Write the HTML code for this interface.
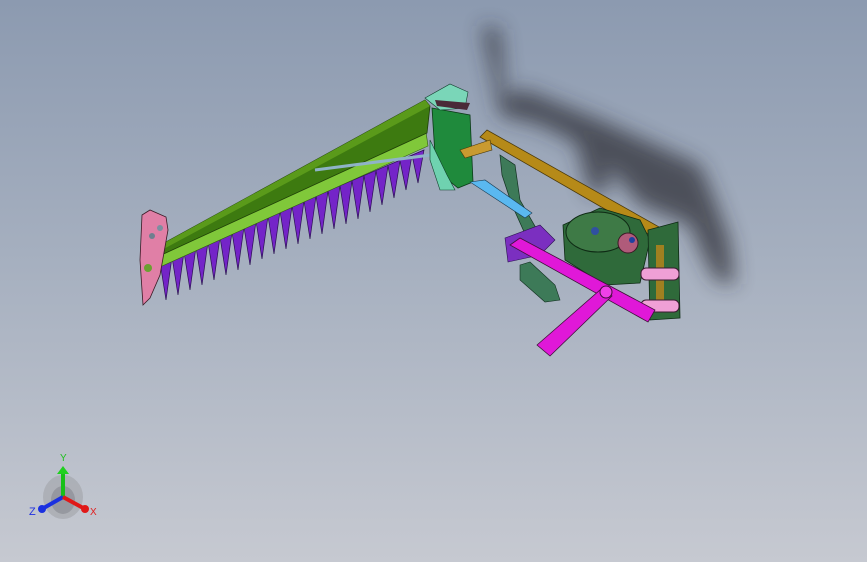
<!DOCTYPE html>
<html><head><meta charset="utf-8"><style>
html,body{margin:0;padding:0;width:867px;height:562px;overflow:hidden}
body{background:linear-gradient(#8c9ab0 0%,#a5afbf 45%,#c6c9d1 100%)}
svg{position:absolute;left:0;top:0}
</style></head><body>
<svg width="867" height="562" viewBox="0 0 867 562">
<defs><filter id="b" x="-30%" y="-30%" width="160%" height="160%"><feGaussianBlur stdDeviation="10"/></filter></defs>
<g filter="url(#b)" fill="#2a2c33" opacity="0.7">
<path d="M482 25 L500 30 L505 95 L525 90 L600 120 L700 165 L715 200 L730 240 L735 285 L715 280 L700 250 L690 225 L640 205 L620 180 L590 150 L540 125 L500 115 Z"/>
<path d="M570 120 L600 125 L610 190 L590 195 Z"/>
</g>
<!-- teeth -->
<path d="M160 262 L166 300 L172 257 L178 295 L184 252 L190 290 L196 247 L202 285 L208 242 L214 280 L220 237 L226 275 L232 232 L238 270 L244 227 L250 265 L256 221 L262 259 L268 216 L274 254 L280 211 L286 249 L292 206 L298 244 L304 201 L310 239 L316 196 L322 234 L328 191 L334 229 L340 186 L346 224 L352 181 L358 219 L364 176 L370 212 L376 171 L382 205 L388 166 L394 198 L400 161 L406 190 L412 155 L418 183 L424 150 Z" fill="#7424c8" stroke="#2a1050" stroke-width="0.7"/>
<!-- green leaf strip -->
<path d="M156 256 L426 132 L428 146 L160 267 Z" fill="#80c83a" stroke="#2f5a10" stroke-width="0.6"/>
<!-- bar -->
<path d="M155 248 L425 100 L430 106 L427 133 L157 257 Z" fill="#3d7a10" stroke="#1f4008" stroke-width="0.8"/>
<path d="M155 248 L425 100 L430 106 L158 252 Z" fill="#5a9a1a"/>
<!-- left shoe -->
<path d="M142 215 L150 210 L166 217 L168 230 L160 275 L150 298 L143 305 L140 260 Z" fill="#e07fa6" stroke="#3a1a25" stroke-width="0.8"/>
<circle cx="160" cy="228" r="3" fill="#7c8fa0"/><circle cx="152" cy="236" r="3" fill="#6f7f8f"/>
<circle cx="148" cy="268" r="4" fill="#6aa030"/>
<path d="M315 170 L500 146" stroke="#8fb3c8" stroke-width="3"/>
<path d="M432 108 L470 115 L473 182 L458 188 L436 170 Z" fill="#1f8a3c" stroke="#0c3a18" stroke-width="0.8"/>
<path d="M430 140 L447 175 L455 190 L440 190 L430 160 Z" fill="#6fd2b0" stroke="#10402a" stroke-width="0.6"/>
<path d="M425 98 L450 84 L468 92 L465 108 L440 110 Z" fill="#7ad6b8" stroke="#103a2a" stroke-width="0.6"/>
<path d="M435 100 L470 103 L467 110 L437 106 Z" fill="#4a2a38"/>
<path d="M480 137 L487 130 L668 232 L662 242 Z" fill="#b68a18" stroke="#4a3808" stroke-width="0.8"/>
<path d="M460 150 L490 140 L492 150 L465 158 Z" fill="#c99a30" stroke="#4a3808" stroke-width="0.6"/>
<path d="M500 155 L515 165 L520 200 L540 235 L530 245 L512 205 L502 175 Z" fill="#3d7a58" stroke="#123020" stroke-width="0.7"/>
<path d="M470 182 L485 180 L532 213 L525 218 Z" fill="#5ab8f0" stroke="#1a3a50" stroke-width="0.6"/>
<path d="M563 225 L600 208 L640 220 L650 240 L640 283 L605 285 L565 260 Z" fill="#2f6a3a" stroke="#0e2a14" stroke-width="0.8"/>
<ellipse cx="598" cy="232" rx="32" ry="20" fill="#3e7a46" stroke="#0e2a14"/>
<circle cx="595" cy="231" r="4" fill="#3050a0"/>
<circle cx="628" cy="243" r="10" fill="#b05b7a" stroke="#3a1a25"/>
<circle cx="632" cy="240" r="3" fill="#2040a0"/>
<path d="M648 230 L678 222 L680 318 L650 320 Z" fill="#2f6a3a" stroke="#0e2a14" stroke-width="0.8"/>
<path d="M656 245 L664 245 L664 300 L656 300 Z" fill="#a08020"/>
<rect x="641" y="268" width="38" height="12" rx="5" fill="#f0a0d6" stroke="#3a1a30"/>
<rect x="641" y="300" width="38" height="12" rx="5" fill="#f0a0d6" stroke="#3a1a30"/>
<path d="M505 238 L540 225 L555 240 L540 255 L508 262 Z" fill="#7b2fc0" stroke="#2a1050" stroke-width="0.6"/>
<path d="M520 265 L530 262 L555 285 L560 300 L545 302 L520 280 Z" fill="#3d7a58" stroke="#123020" stroke-width="0.6"/>
<path d="M510 245 L520 238 L655 310 L648 322 Z" fill="#e018d8" stroke="#40103a" stroke-width="0.8"/>
<path d="M537 345 L600 290 L612 296 L550 356 Z" fill="#e018d8" stroke="#40103a" stroke-width="0.8"/>
<circle cx="606" cy="292" r="6" fill="#f040e8" stroke="#40103a"/>
</svg>
<svg width="867" height="562" viewBox="0 0 867 562">
<ellipse cx="63" cy="497" rx="20" ry="22" fill="#a5a8ae" opacity="0.7"/>
<ellipse cx="63" cy="500" rx="12" ry="14" fill="#8c8f95" opacity="0.7"/>
<line x1="63" y1="497" x2="63" y2="473" stroke="#18c018" stroke-width="4"/>
<path d="M57 474 L63 466 L69 474 Z" fill="#20d020"/>
<line x1="63" y1="497" x2="42" y2="509" stroke="#1a30e0" stroke-width="4"/>
<circle cx="42" cy="509" r="4" fill="#1a30e0"/>
<line x1="63" y1="497" x2="85" y2="509" stroke="#e01818" stroke-width="4"/>
<circle cx="85" cy="509" r="4" fill="#e01818"/>
<text x="60" y="461" font-family="Liberation Sans,sans-serif" font-size="10" fill="#20c020">Y</text>
<text x="29" y="515" font-family="Liberation Sans,sans-serif" font-size="11" fill="#2030e0">Z</text>
<text x="90" y="515" font-family="Liberation Sans,sans-serif" font-size="10" fill="#e02020">X</text>
</svg>
</body></html>
